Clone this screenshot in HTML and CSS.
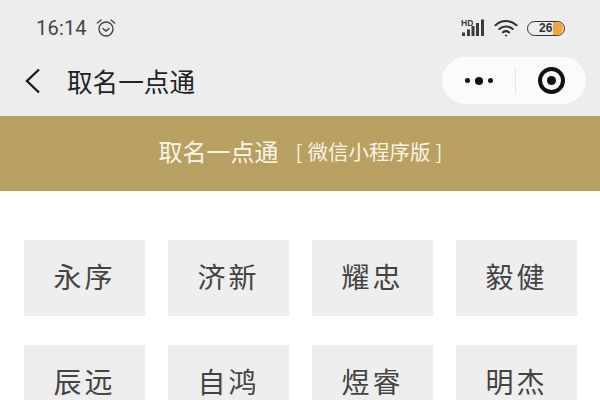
FILE: index.html
```html
<!DOCTYPE html>
<html lang="zh-CN">
<head>
<meta charset="utf-8">
<title>取名一点通</title>
<link rel="stylesheet" href="styles.css">
</head>
<body>
<div class="page">
  <header class="top">
    <div class="status">
      <div class="status-left">
        <span class="time">16:14</span>
        <svg class="alarm" width="20" height="20" viewBox="0 0 20 20" fill="none" stroke="#444" stroke-width="1.4" stroke-linecap="round" stroke-linejoin="round">
          <circle cx="10" cy="11" r="7"/>
          <path d="M7 10.5l3 2.6 3-2.6"/>
          <path d="M1.5 5L5 2M18.5 5L15 2"/>
        </svg>
      </div>
      <div class="status-right">
        <svg width="24" height="20" viewBox="0 0 24 20">
          <text x="0" y="7.5" class="hd">HD</text>
          <g fill="#3c3c3c">
            <rect x="1" y="14.5" width="3" height="3.5"/>
            <rect x="6" y="11.5" width="3" height="6.5"/>
            <rect x="10.5" y="8" width="3" height="10"/>
            <rect x="15" y="5" width="3" height="13"/>
            <rect x="20" y="1.5" width="3" height="16.5"/>
          </g>
        </svg>
        <svg width="24" height="20" viewBox="0 0 24 20" fill="none" stroke="#333" stroke-width="2.1" stroke-linecap="round">
          <path d="M1.5 7.2C7.5 1.6 16.5 1.6 22.5 7.2"/>
          <path d="M5.3 11C9 7.6 15 7.6 18.7 11"/>
          <path d="M8.9 14.4C10.8 12.9 13.2 12.9 15.1 14.4"/>
          <circle cx="12" cy="17.5" r="1.1" fill="#333" stroke="none"/>
        </svg>
        <div class="battery"><span class="battery-num">26</span><span class="battery-fill"></span></div>
      </div>
    </div>
    <nav class="nav">
      <svg class="back" width="18" height="26" viewBox="0 0 18 26" fill="none" stroke="#1c1c1c" stroke-width="2.4">
        <path d="M15 1.5L3 13l12 11.5"/>
      </svg>
      <h1 class="nav-title">取名一点通</h1>
      <div class="capsule">
        <div class="cap-part cap-more">
          <span class="dot"></span><span class="dot big"></span><span class="dot"></span>
        </div>
        <div class="cap-line"></div>
        <div class="cap-part cap-close"><span class="target"></span></div>
      </div>
    </nav>
  </header>
  <section class="banner">
    <span class="banner-title">取名一点通</span>
    <span class="banner-sub"><span>[</span><span>微信小程序版</span><span>]</span></span>
  </section>
  <main class="grid">
    <div class="name">永序</div>
    <div class="name">济新</div>
    <div class="name">耀忠</div>
    <div class="name">毅健</div>
    <div class="name">辰远</div>
    <div class="name">自鸿</div>
    <div class="name">煜睿</div>
    <div class="name">明杰</div>
  </main>
</div>
</body>
</html>
```
FILE: styles.css
```css
* { box-sizing: border-box; }
html, body { margin: 0; padding: 0; background: #fff; }
body { font-family: "Noto Sans CJK SC", "Liberation Sans", sans-serif; }
.page { width: 600px; height: 400px; overflow: hidden; }

.top { height: 116px; background: #ededed; display: flex; flex-direction: column; }
.status { height: 56px; display: flex; align-items: center; justify-content: space-between; padding: 0 35px 0 36px; }
.status-left { display: flex; align-items: center; gap: 9px; }
.time { font-family: Roboto, "Liberation Sans", sans-serif; font-size: 20px; color: #444; letter-spacing: 0.2px; }
.alarm { display: block; }
.status-right { display: flex; align-items: center; gap: 9px; }
.status-right svg { display: block; }
.hd { font-family: "Liberation Sans", sans-serif; font-size: 8.5px; font-weight: 700; fill: #3c3c3c; }
.battery { width: 38px; height: 15px; border: 1.2px solid #333; border-radius: 8px; overflow: hidden; display: flex; align-items: center; }
.battery-num { margin-left: 11px; width: 14px; font-family: "Liberation Sans", sans-serif; font-weight: 700; font-size: 12px; line-height: 14px; color: #333; }
.battery-fill { width: 10px; height: 15px; background: #f2a73b; border-radius: 0 8px 8px 0; }

.nav { height: 60px; display: flex; align-items: center; padding: 0 14px 11px 24px; }
.back { display: block; flex: none; }
.nav-title { margin: 0 0 0 25px; font-size: 25.6px; line-height: 36px; font-weight: 400; color: #222; }
.capsule { margin-left: auto; width: 144px; height: 47px; border-radius: 24px; background: #fbfbfb; display: flex; align-items: center; }
.cap-part { display: flex; align-items: center; justify-content: center; height: 100%; }
.cap-more { width: 73px; gap: 5px; }
.cap-close { flex: 1; }
.cap-line { width: 1px; height: 27px; background: #e6e6e6; }
.dot { width: 5px; height: 5px; border-radius: 50%; background: #111; }
.dot.big { width: 8px; height: 8px; }
.target { width: 27px; height: 27px; border-radius: 50%; border: 4px solid #111; display: flex; align-items: center; justify-content: center; }
.target::before { content: ""; width: 9px; height: 9px; border-radius: 50%; background: #111; }

.banner { height: 75px; background: #b8a063; display: flex; align-items: center; justify-content: center; gap: 17px; color: #f8f4e6; padding: 0 0 5px 1px; }
.banner-title { font-size: 24px; line-height: 32px; }
.banner-sub { font-size: 20.5px; line-height: 32px; display: flex; gap: 5px; }

.grid { display: grid; grid-template-columns: repeat(4, 121px); column-gap: 23px; row-gap: 29px; padding: 49px 0 0 24px; }
.name { height: 76px; background: #eeeeee; display: flex; align-items: center; justify-content: center; font-size: 28px; letter-spacing: 3px; padding: 0 0 5px 0; color: #444; }
```
